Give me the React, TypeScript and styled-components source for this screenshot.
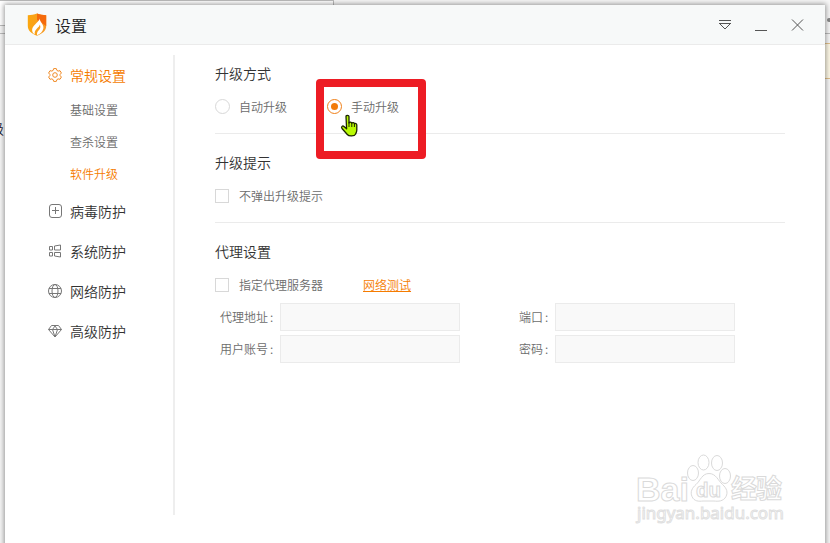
import React, { useState } from "react";
import styled, { createGlobalStyle } from "styled-components";

const GlobalStyle = createGlobalStyle`
  * {
    box-sizing: border-box;
  }

  body {
    margin: 0;
    font-family: "Noto Sans CJK SC", sans-serif;
    font-size: 12px;
    font-weight: 350;
    color: #6c6c6c;
    overflow: hidden;
  }
`;

const Desktop = styled.div`
  position: relative;
  width: 830px;
  height: 543px;
  padding: 5px 5px 0;
  background: #f6f6f6;
  overflow: hidden;
`;

const BackTab = styled.div`
  position: absolute;
  left: 0;
  top: 0;
  width: 334px;
  height: 26px;
  background: #fff;
  border: 1px solid #bbb;
  border-left: 0;
`;

const BackLine = styled.div`
  position: absolute;
  left: 0;
  top: 33px;
  width: 830px;
  height: 1px;
  background: #bbb;
`;

const BackText = styled.div`
  position: absolute;
  left: -10px;
  top: 118px;
  font-size: 14px;
  line-height: 20px;
  color: #223;
`;

const BackNote = styled.div`
  position: absolute;
  left: 820px;
  top: 43px;
  width: 14px;
  height: 36px;
  background: #fdf8e6;
  border: 1px solid #e2c08a;
`;

const BackDot = styled.div`
  position: absolute;
  left: 827px;
  top: 18px;
  width: 6px;
  height: 4px;
  border-radius: 2px;
  background: #888;
`;

const Window = styled.div`
  position: relative;
  height: 560px;
  background: #fff;
  box-shadow: 0 0 5px 1px rgba(0, 0, 0, 0.4);
`;

const TitleBar = styled.header`
  display: flex;
  align-items: center;
  height: 40px;
  padding: 0 21px 0 22px;
  background: #f7f9f9;
  border-bottom: 1px solid #ebebeb;

  h1 {
    flex: 1;
    margin: 0 0 0 8px;
    font-size: 16px;
    font-weight: 350;
    line-height: 24px;
    color: #222;
  }
`;

const WindowButtons = styled.div`
  display: flex;
  gap: 22px;

  svg {
    display: block;
  }
`;

const Body = styled.div`
  display: flex;
`;

const Sidebar = styled.nav`
  width: 170px;
  height: 460px;
  margin-top: 10px;
  padding-left: 43px;
  border-right: 2px solid #eee;
`;

const NavItem = styled.div<{ $active?: boolean }>`
  display: flex;
  align-items: center;
  gap: 8px;
  height: 40px;
  font-size: 14px;
  color: ${({ $active }) => ($active ? "#f57c00" : "#333")};

  span {
    margin-bottom: 1px;
  }

  svg {
    display: block;
    color: ${({ $active }) => ($active ? "#f08a24" : "#777")};
  }
`;

const SubList = styled.div`
  margin: -1px 0 1px 22px;
`;

const SubItem = styled.div<{ $active?: boolean }>`
  height: 32px;
  line-height: 32px;
  color: ${({ $active }) => ($active ? "#f57c00" : "#6c6c6c")};
`;

const Content = styled.main`
  width: 570px;
  margin-left: 40px;
`;

const Section = styled.section`
  height: 89px;
  padding-top: 14px;
  border-bottom: 1px solid #ebebeb;

  &:last-child {
    height: auto;
    border-bottom: 0;
  }

  h2 {
    margin: 0 0 5px;
    font-size: 14px;
    font-weight: 350;
    line-height: 28px;
    color: #333;
  }
`;

const Options = styled.div`
  display: flex;
  align-items: center;
  gap: 40px;
  height: 28px;
`;

const Option = styled.label`
  display: flex;
  align-items: center;
`;

const Radio = styled.span<{ $checked: boolean }>`
  display: flex;
  align-items: center;
  justify-content: center;
  width: 15px;
  height: 15px;
  margin-right: 9px;
  border: 1px solid ${({ $checked }) => ($checked ? "#f08019" : "#d8d8d8")};
  border-radius: 50%;

  &::after {
    content: "";
    width: 7px;
    height: 7px;
    border-radius: 50%;
    background: ${({ $checked }) => ($checked ? "#f27c0a" : "transparent")};
  }
`;

const Checkbox = styled.span`
  width: 14px;
  height: 14px;
  margin: 2px 10px 0 0;
  border: 1px solid #d8d8d8;
`;

const TestLink = styled.a`
  color: #f57c00;
  text-decoration: underline;
  text-underline-offset: 1px;
`;

const ProxyForm = styled.div`
  display: grid;
  grid-template-columns: 60px 180px 59px 36px 180px;
  row-gap: 4px;
  margin: 5px 0 0 5px;
  line-height: 27px;

  label span {
    margin-left: 2px;
  }

  label:nth-of-type(even) {
    grid-column: 4;
  }
`;

const Field = styled.input`
  width: 180px;
  height: 28px;
  padding: 0 6px;
  background: #f9f9f9;
  border: 1px solid #ebebeb;
  outline: none;
`;

const Highlight = styled.div`
  position: absolute;
  left: 316px;
  top: 79px;
  width: 110px;
  height: 80px;
  border: 8px solid #ed1c24;
  border-radius: 4px;
`;

const Cursor = styled.svg`
  position: absolute;
  left: 340px;
  top: 114px;
`;

const Watermark = styled.svg`
  position: absolute;
  left: 630px;
  top: 448px;
`;

const ShieldLogo = () => (
  <svg width="20" height="23" viewBox="0 0 20 23">
    <defs>
      <linearGradient id="shield" x1="0" y1="0" x2="1" y2="0">
        <stop offset="0" stopColor="#fba70f" />
        <stop offset="1" stopColor="#f79a28" />
      </linearGradient>
    </defs>
    <path
      d="M10 .6C7 2 4 2.200.8 2.200V13c0 5 4 7.500 9.200 9.800C15.200 20.500 19.200 18 19.200 13V2.200C16 2.200 13 2 10 .6Z"
      fill="url(#shield)"
    />
    <path d="M10 .6C13 2 16 2.200 19.200 2.200V13L10 7Z" fill="#f56a0c" />
    <path
      d="M12.800 4c.3 3-2 4.800-4.700 7.500C5.300 14.200 4.300 16.500 6 20c.6.600 1.200.900 1.800 1.200-.5-3.200 1.500-5 3.300-6.900 1-1 1.500-1.600 1.600-2.900 1.300 2.100.7 4-.9 5.800-1.400 1.500-2.200 2.700-1.600 5.100 3.200-1.400 5.600-3.600 6.200-7 .7-4.300-4.600-6.500-3.600-11.300Z"
      fill="#fff"
    />
  </svg>
);

const icons = {
  gear: (
    <>
      <path d="M5.700.6h2.600l.6 1.800 1.200.7 1.900-.4 1.400 2.300L12.100 6.400v1.200l1.300 1.400-1.400 2.300-1.900-.4-1.200.7-.6 1.800H5.700l-.6-1.800-1.200-.7-1.900.4L.6 9l1.300-1.400V6.400L.6 5l1.400-2.300 1.900.4 1.200-.7Z" />
      <circle cx="7" cy="7" r="2.300" />
    </>
  ),
  plus: (
    <>
      <rect x="1.500" y=".5" width="12" height="13" rx="2.500" />
      <path d="M4 6.500h7M7.500 3v7" />
    </>
  ),
  system: (
    <path d="M1.500 2.500h3v3.500h-3ZM1.500 8.500h3v3.500h-3ZM6.500 2l6-1v5h-6ZM6.500 8.500h6V13l-6-1Z" />
  ),
  globe: (
    <>
      <circle cx="7" cy="7" r="6.500" />
      <ellipse cx="7" cy="7" rx="3" ry="6.500" />
      <path d="M1 4.500h12M1 9.500h12" />
    </>
  ),
  gem: (
    <path d="M3.500 1.500h7l3 4L7 13 .5 5.500ZM.5 5.500h13M4.500 5.500 7 13l2.500-7.500M4.500 5.500 7 2l2.500 3.500" />
  ),
};

const NavIcon = ({ name }: { name: keyof typeof icons }) => (
  <svg
    width="14"
    height="14"
    viewBox="0 0 14 14"
    fill="none"
    stroke="currentColor"
    strokeWidth="1"
  >
    {icons[name]}
  </svg>
);

const subItems = ["基础设置", "查杀设置", "软件升级"];

const navItems: { icon: keyof typeof icons; label: string }[] = [
  { icon: "plus", label: "病毒防护" },
  { icon: "system", label: "系统防护" },
  { icon: "globe", label: "网络防护" },
  { icon: "gem", label: "高级防护" },
];

const proxyFields = ["代理地址", "端口", "用户账号", "密码"];

const App = () => {
  const [mode, setMode] = useState("手动升级");

  return (
    <Desktop>
      <GlobalStyle />
      <BackTab />
      <BackLine />
      <BackText>级</BackText>
      <BackNote />
      <BackDot />
      <Window>
        <TitleBar>
          <ShieldLogo />
          <h1>设置</h1>
          <WindowButtons>
            <svg width="14" height="14" fill="none" stroke="#555">
              <path d="M1 2.500h12M1 5.500h12M2 6l5 5 5-5" />
            </svg>
            <svg width="14" height="14" fill="none" stroke="#555">
              <path d="M1 12.500h12" />
            </svg>
            <svg width="14" height="14" fill="none" stroke="#555">
              <path d="M2 1.500l11 11M13 1.500l-11 11" />
            </svg>
          </WindowButtons>
        </TitleBar>
        <Body>
          <Sidebar>
            <NavItem $active>
              <NavIcon name="gear" />
              <span>常规设置</span>
            </NavItem>
            <SubList>
              {subItems.map((item) => (
                <SubItem key={item} $active={item === "软件升级"}>
                  {item}
                </SubItem>
              ))}
            </SubList>
            {navItems.map(({ icon, label }) => (
              <NavItem key={label}>
                <NavIcon name={icon} />
                <span>{label}</span>
              </NavItem>
            ))}
          </Sidebar>
          <Content>
            <Section>
              <h2>升级方式</h2>
              <Options>
                {["自动升级", "手动升级"].map((item) => (
                  <Option key={item} onClick={() => setMode(item)}>
                    <Radio $checked={mode === item} />
                    {item}
                  </Option>
                ))}
              </Options>
            </Section>
            <Section>
              <h2>升级提示</h2>
              <Options>
                <Option>
                  <Checkbox />
                  不弹出升级提示
                </Option>
              </Options>
            </Section>
            <Section>
              <h2>代理设置</h2>
              <Options>
                <Option>
                  <Checkbox />
                  指定代理服务器
                </Option>
                <TestLink>网络测试</TestLink>
              </Options>
              <ProxyForm>
                {proxyFields.map((label) => (
                  <React.Fragment key={label}>
                    <label>
                      {label}
                      <span>:</span>
                    </label>
                    <Field disabled />
                  </React.Fragment>
                ))}
              </ProxyForm>
            </Section>
          </Content>
        </Body>
      </Window>
      <Highlight />
      <Cursor width="19" height="24" viewBox="0 0 19 24">
        <path
          d="M6 2.500c0-1.600 3-1.600 3 0V9c.4-1.300 2.600-1.200 2.800.2.500-1 2.500-.8 2.600.6.700-.7 2.400-.3 2.400 1.200V16c0 2-.8 3-1.300 4.200-1 2.200-6.600 2.400-8.200.3L2 14.500c-1.200-1.800.6-3.200 2-2l2.600 2.300Z"
          fill="#b9fa05"
          stroke="#1c2600"
          strokeWidth="1.300"
          strokeLinejoin="round"
        />
        <path d="M9 8v5M11.800 9v4M14.400 10v3" stroke="#1c2600" />
      </Cursor>
      <Watermark width="165" height="82" fill="#fff" stroke="#dadada">
        <text
          x="6"
          y="53"
          fontSize="34"
          fontFamily="Liberation Sans, sans-serif"
          fontWeight="700"
          textLength="53"
          lengthAdjust="spacingAndGlyphs"
        >
          Bai
        </text>
        <ellipse cx="63" cy="25" rx="5.500" ry="7.500" />
        <ellipse cx="73.500" cy="14.500" rx="5.500" ry="7.500" />
        <ellipse cx="87" cy="15" rx="5.500" ry="7.500" />
        <ellipse cx="95" cy="28" rx="5.500" ry="7.500" />
        <path d="M79 25.500c7 0 9 7 13.500 11 4.500 4 5.500 8 3.500 12-2.500 5-8 5-12 4.500h-11c-4 .5-9 .5-11-4.500-2-4.500 0-8.500 4-12 4.500-4 6-11 13-11Z" />
        <text
          x="66"
          y="49"
          fontSize="20"
          fontFamily="Liberation Sans, sans-serif"
          fontWeight="700"
          textLength="25"
          lengthAdjust="spacingAndGlyphs"
        >
          du
        </text>
        <text
          x="101"
          y="50"
          fontSize="26"
          fontWeight="700"
          fontFamily="Noto Sans CJK SC, sans-serif"
          textLength="51"
        >
          经验
        </text>
        <text
          x="7"
          y="71"
          fontSize="17"
          fontFamily="Noto Sans, sans-serif"
          fontWeight="400"
          textLength="147"
          lengthAdjust="spacingAndGlyphs"
          stroke="#e0e0e0"
        >
          jingyan.baidu.com
        </text>
      </Watermark>
    </Desktop>
  );
};

export default App;
